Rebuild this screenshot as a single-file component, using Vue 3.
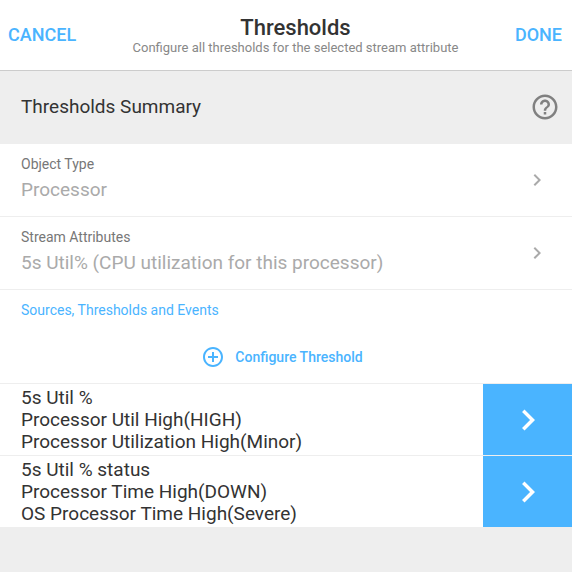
<script setup>
const fields = [
  { label: 'Object Type', value: 'Processor' },
  { label: 'Stream Attributes', value: '5s Util% (CPU utilization for this processor)' },
]

const thresholds = [
  {
    name: '5s Util %',
    lines: ['Processor Util High(HIGH)', 'Processor Utilization High(Minor)'],
  },
  {
    name: '5s Util % status',
    lines: ['Processor Time High(DOWN)', 'OS Processor Time High(Severe)'],
  },
]
</script>

<template>
  <div class="page">
    <header class="toolbar">
      <button type="button" class="action">CANCEL</button>
      <div class="heading">
        <h1>Thresholds</h1>
        <p>Configure all thresholds for the selected stream attribute</p>
      </div>
      <button type="button" class="action">DONE</button>
    </header>

    <main>
      <section class="summary">
        <h2>Thresholds Summary</h2>
        <button type="button" class="help" aria-label="Help">
          <svg viewBox="0 0 24 24" width="30" height="30" fill="currentColor" aria-hidden="true">
            <path d="M11 18h2v-2h-2v2zm1-16C6.480 2 2 6.480 2 12s4.480 10 10 10 10-4.480 10-10S17.520 2 12 2zm0 18c-4.410 0-8-3.590-8-8s3.590-8 8-8 8 3.590 8 8-3.590 8-8 8zm0-14c-2.210 0-4 1.790-4 4h2c0-1.100.9-2 2-2s2 .9 2 2c0 2-3 1.750-3 5h2c0-2.250 3-2.500 3-5 0-2.210-1.790-4-4-4z" />
          </svg>
        </button>
      </section>

      <button v-for="field in fields" :key="field.label" type="button" class="field">
        <span class="field-text">
          <span class="field-label">{{ field.label }}</span>
          <span class="field-value">{{ field.value }}</span>
        </span>
        <svg viewBox="0 0 24 24" width="24" height="24" fill="currentColor" aria-hidden="true">
          <path d="M10 6L8.590 7.410 13.170 12l-4.580 4.590L10 18l6-6z" />
        </svg>
      </button>

      <section class="sources">
        <h3>Sources, Thresholds and Events</h3>
        <button type="button" class="configure">
          <svg viewBox="0 0 24 24" width="24" height="24" fill="currentColor" aria-hidden="true">
            <path d="M13 7h-2v4H7v2h4v4h2v-4h4v-2h-4V7zm-1-5C6.480 2 2 6.480 2 12s4.480 10 10 10 10-4.480 10-10S17.520 2 12 2zm0 18c-4.410 0-8-3.590-8-8s3.590-8 8-8 8 3.590 8 8-3.590 8-8 8z" />
          </svg>
          <span>Configure Threshold</span>
        </button>
      </section>

      <ul class="list">
        <li v-for="item in thresholds" :key="item.name">
          <div class="item-text">
            <div>{{ item.name }}</div>
            <div v-for="line in item.lines" :key="line">{{ line }}</div>
          </div>
          <button type="button" class="open" :aria-label="'Open ' + item.name">
            <svg viewBox="0 0 24 24" width="42" height="42" fill="currentColor" aria-hidden="true">
              <path d="M10 6L8.590 7.410 13.170 12l-4.580 4.590L10 18l6-6z" />
            </svg>
          </button>
        </li>
      </ul>
    </main>
  </div>
</template>

<style>
body {
  background: #eeeeee;
}
</style>

<style scoped>
.page {
  font-family: Roboto, "Liberation Sans", sans-serif;
  color: #333333;
}

h1,
h2,
h3,
p,
ul {
  margin: 0;
  padding: 0;
}

button {
  margin: 0;
  padding: 0;
  border: 0;
  background: none;
  font: inherit;
  color: inherit;
  cursor: pointer;
}

svg {
  display: block;
  flex: none;
}

.toolbar {
  display: flex;
  align-items: center;
  justify-content: space-between;
  min-height: 70px;
  padding: 0 10px 0 8px;
  background: #ffffff;
  border-bottom: 1px solid #cccccc;
}

.action {
  font-size: 18px;
  line-height: 22px;
  font-weight: 500;
  color: #4ab4ff;
}

.heading {
  text-align: center;
}

h1 {
  font-size: 22px;
  line-height: 26px;
  font-weight: 500;
}

.heading p {
  font-size: 13px;
  line-height: 14px;
  color: #888888;
}

.summary {
  display: flex;
  align-items: center;
  justify-content: space-between;
  min-height: 72px;
  padding: 0 12px 0 21px;
  border-bottom: 1px solid #eeeeee;
}

h2 {
  font-size: 19px;
  line-height: 22px;
  font-weight: 400;
}

.help {
  color: #808080;
}

.field {
  display: flex;
  align-items: center;
  justify-content: space-between;
  width: 100%;
  padding: 0 23px 0 21px;
  background: #ffffff;
  border-bottom: 1px solid #eeeeee;
  text-align: left;
  color: #aaaaaa;
}

.field-text {
  display: grid;
  gap: 4px;
  padding: 9px 0 15px;
}

.field-label {
  font-size: 14px;
  line-height: 22px;
  color: #777777;
}

.field-value {
  font-size: 19px;
  line-height: 22px;
}

.sources {
  display: grid;
  gap: 24px;
  padding: 9px 21px 14px;
  background: #ffffff;
  border-bottom: 1px solid #eeeeee;
  color: #4ab4ff;
}

h3 {
  font-size: 14px;
  line-height: 22px;
  font-weight: 400;
}

.configure {
  display: flex;
  align-items: center;
  justify-self: center;
  gap: 10px;
  padding-right: 8px;
  font-size: 14px;
  line-height: 22px;
  font-weight: 500;
}

.list {
  list-style: none;
  background: #ffffff;
}

.list li {
  display: flex;
  justify-content: space-between;
}

.list li + li {
  border-top: 1px solid #eeeeee;
}

.item-text {
  padding: 3px 0 2px 21px;
  font-size: 19px;
  line-height: 22px;
}

.open {
  display: flex;
  align-items: center;
  justify-content: center;
  width: 89px;
  background: #4ab4ff;
  color: #ffffff;
}
</style>
